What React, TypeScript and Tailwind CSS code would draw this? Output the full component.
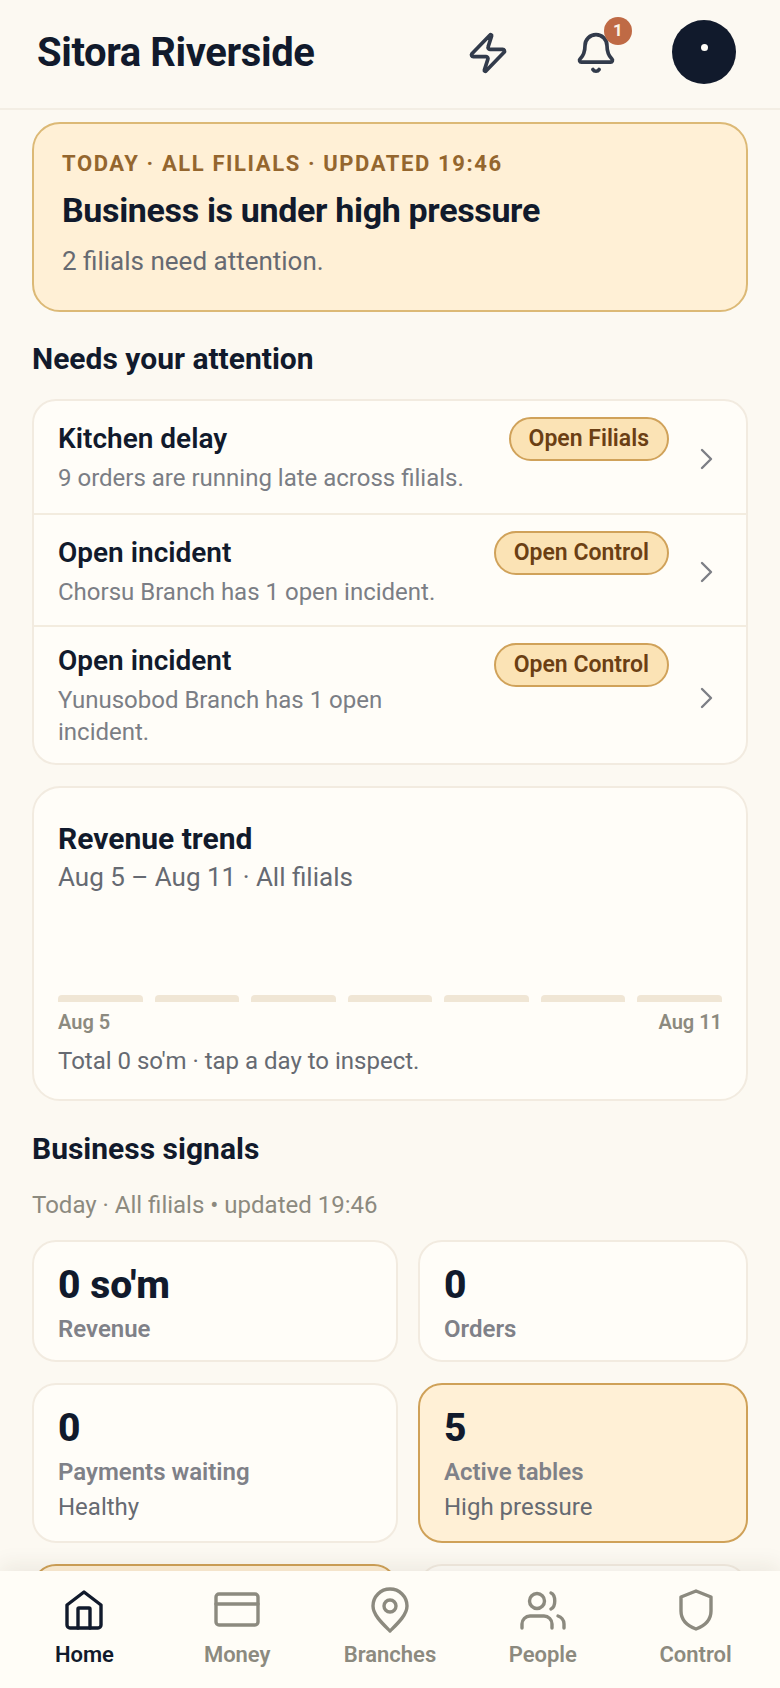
const DAYS = [1, 2, 3, 4, 5, 6, 7];

const ALERTS = [
  { title: 'Kitchen delay', text: '9 orders are running late across filials.', action: 'Open Filials', rowClass: 'h-[114px]', textClass: 'mt-[3px]' },
  { title: 'Open incident', text: 'Chorsu Branch has 1 open incident.', action: 'Open Control', rowClass: 'h-[112px]', textClass: 'mt-[3px]' },
  { title: 'Open incident', text: 'Yunusobod Branch has 1 open incident.', action: 'Open Control', rowClass: 'h-[137px]', textClass: '-mt-[1px]' },
];

function Chevron() {
  return (
    <svg width="18" height="24" viewBox="0 0 18 24" fill="none" stroke="#7d7f85" strokeWidth="2.4" strokeLinecap="round" strokeLinejoin="round" className="shrink-0">
      <path d="M4 3l9 9-9 9" />
    </svg>
  );
}

function AlertRow(props: { title: string; text: string; action: string; rowClass: string; textClass: string; last: boolean }) {
  return (
    <div className={`flex items-start pl-6 pr-[30px] pt-4 ${props.rowClass} ${props.last ? '' : 'border-b-2 border-[#f3ecdf]'}`}>
      <div className={`flex-1 min-w-0 ${props.textClass}`}>
        <div className="text-[28px] leading-[37px] font-semibold text-[#111a2c]">{props.title}</div>
        <div className="mt-[5px] w-[412px] text-[24px] leading-8 text-[#7b7e85]">{props.text}</div>
      </div>
      <div className="h-11 px-[18px] flex items-center rounded-full bg-[#fbe3b5] border-2 border-[#d0a25a] text-[23px] font-semibold text-[#6b3f14] shrink-0">
        {props.action}
      </div>
      <div className="w-[47px] shrink-0 flex justify-end self-center pb-3">
        <Chevron />
      </div>
    </div>
  );
}

function Signal(props: { value: string; label: string; note?: string; warm?: boolean }) {
  return (
    <div className={`rounded-[24px] border-2 px-6 pt-[18px] ${props.note ? 'h-[160px]' : 'h-[122px]'} ${props.warm ? 'bg-[#fff0d6] border-[#cfa158]' : 'bg-[#fffdf8] border-[#f2ebe0]'}`}>
      <div className="text-[39px] leading-[50px] font-extrabold text-[#111a2c]">{props.value}</div>
      <div className="mt-[3px] text-[24px] leading-8 font-semibold text-[#7f8188]">{props.label}</div>
      {props.note && <div className="mt-[3px] text-[24px] leading-8 text-[#666a72]">{props.note}</div>}
    </div>
  );
}

function NavItem(props: { label: string; active?: boolean; children: React.ReactNode }) {
  return (
    <div className={`flex-1 flex flex-col items-center ${props.active ? 'text-[#111a2c]' : 'text-[#8c8a7f]'}`}>
      <div className="h-[50px] w-12 flex items-center justify-center">{props.children}</div>
      <span className="mt-[6px] text-[22px] leading-7 font-semibold">{props.label}</span>
    </div>
  );
}

export default function App() {
  return (
    <div className="h-[1688px] w-[780px] flex flex-col overflow-hidden bg-[#fcf9f2] font-['Roboto',sans-serif]">
      {/* Header */}
      <header className="h-[110px] shrink-0 flex items-center pl-[37px] pr-[44px] pb-1 border-b-2 border-[#f3eee4]">
        <h1 className="flex-1 mt-[1px] text-[40px] font-bold tracking-[-0.4px] text-[#111a2c]">Sitora Riverside</h1>
        <svg width="44" height="44" viewBox="0 0 24 24" fill="none" stroke="#323b4b" strokeWidth="2" strokeLinecap="round" strokeLinejoin="round" className="mr-16 mt-[2px]">
          <path d="M4 14a1 1 0 0 1-.78-1.63l9.9-10.2a.5.5 0 0 1 .86.46l-1.92 6.02A1 1 0 0 0 13 10h7a1 1 0 0 1 .78 1.63l-9.9 10.2a.5.5 0 0 1-.86-.46l1.92-6.02A1 1 0 0 0 11 14z" />
        </svg>
        <div className="relative mr-[54px] mt-[2px]">
          <svg width="44" height="44" viewBox="0 0 24 24" fill="none" stroke="#323b4b" strokeWidth="2" strokeLinecap="round" strokeLinejoin="round">
            <path d="M10.300 21a2 2 0 0 0 3.400 0" />
            <path d="M3.300 15.300A1 1 0 0 0 4 17h16a1 1 0 0 0 .7-1.700C19.400 14 18 12.500 18 8A6 6 0 0 0 6 8c0 4.500-1.400 6-2.700 7.300" />
          </svg>
          <div className="absolute -top-[14px] -right-[14px] w-7 h-7 rounded-full bg-[#bf6a45] flex items-center justify-center text-[17px] font-bold text-[#fdf3e6]">1</div>
        </div>
        <div className="w-16 h-16 rounded-full bg-[#111a2c] flex justify-center pt-6">
          <div className="w-[7px] h-[7px] rounded-full bg-[#fffdf8]" />
        </div>
      </header>

      <main className="flex-1 min-h-0 overflow-hidden px-8 pt-3">
        {/* Pressure banner */}
        <section className="h-[190px] rounded-[28px] border-2 border-[#dcb976] bg-[#fff0d6] px-[28px] pt-[26px]">
          <div className="text-[22px] leading-7 font-bold tracking-[1.6px] text-[#94662e]">TODAY · ALL FILIALS · UPDATED 19:46</div>
          <div className="mt-[10px] text-[34px] leading-[44px] font-bold tracking-[-0.34px] text-[#111a2c]">Business is under high pressure</div>
          <div className="mt-[13px] text-[26px] leading-8 text-[#666a72]">2 filials need attention.</div>
        </section>

        <h2 className="mt-[29px] text-[30px] leading-9 font-bold text-[#111a2c]">Needs your attention</h2>

        <section className="mt-[22px] h-[366px] rounded-[24px] border-2 border-[#f2ebe0] bg-[#fffdf8] overflow-hidden">
          {ALERTS.map((alert, i) => (
            <AlertRow key={i} {...alert} last={i === ALERTS.length - 1} />
          ))}
        </section>

        {/* Revenue trend */}
        <section className="mt-[21px] h-[315px] rounded-[28px] border-2 border-[#f2ebe0] bg-[#fffdf8] px-6 pt-[33px]">
          <div className="text-[30px] leading-9 font-bold text-[#111a2c]">Revenue trend</div>
          <div className="mt-[2px] text-[26px] leading-9 text-[#666a72]">Aug 5 – Aug 11 · All filials</div>
          <div className="mt-[100px] flex gap-3">
            {DAYS.map((d) => (
              <div key={d} className="flex-1 h-[7px] rounded-t-[4px] bg-[#f0e6d5]" />
            ))}
          </div>
          <div className="mt-[6px] flex justify-between text-[20px] leading-7 font-semibold text-[#8c8a7f]">
            <span>Aug 5</span>
            <span>Aug 11</span>
          </div>
          <div className="mt-[9px] text-[24px] leading-8 text-[#666a72]">Total 0 so'm · tap a day to inspect.</div>
        </section>

        <h2 className="mt-[30px] text-[30px] leading-9 font-bold text-[#111a2c]">Business signals</h2>
        <div className="mt-[22px] text-[24px] leading-8 text-[#8c8a7f]">Today · All filials • updated 19:46</div>

        <div className="mt-[19px] grid grid-cols-[366px_330px] gap-x-5 gap-y-[21px]">
          <Signal value="0 so'm" label="Revenue" />
          <Signal value="0" label="Orders" />
          <Signal value="0" label="Payments waiting" note="Healthy" />
          <Signal value="5" label="Active tables" note="High pressure" warm />
          <div className="h-[120px] rounded-[24px] border-2 border-[#cfa158] bg-[#fff0d6]" />
          <div className="h-[120px] rounded-[24px] border-2 border-[#f2ebe0] bg-[#fffdf8]" />
        </div>
      </main>

      {/* Bottom nav */}
      <nav className="relative h-[117px] shrink-0 flex pt-[14px] px-[8px] bg-[#fffdf7] shadow-[0_-6px_20px_rgba(60,50,30,0.08)]">
        <NavItem label="Home" active>
          <svg width="40" height="42" viewBox="0 0 40 42" fill="none" stroke="currentColor" strokeWidth="3.4" strokeLinecap="round" strokeLinejoin="round">
            <path d="M3 16L20 3l17 13v20a3 3 0 0 1-3 3H6a3 3 0 0 1-3-3z" />
            <path d="M14 39V20a1 1 0 0 1 1-1h10a1 1 0 0 1 1 1v19" />
          </svg>
        </NavItem>
        <NavItem label="Money">
          <svg width="46" height="36" viewBox="0 0 46 36" fill="none" stroke="currentColor" strokeWidth="3.4" strokeLinecap="round" strokeLinejoin="round">
            <rect x="2" y="2" width="42" height="31" rx="3" />
            <path d="M2 12h42" />
          </svg>
        </NavItem>
        <NavItem label="Branches">
          <svg width="38" height="46" viewBox="0 0 38 46" fill="none" stroke="currentColor" strokeWidth="3.4" strokeLinecap="round" strokeLinejoin="round">
            <path d="M19 44C12 37 2 28 2 19a17 17 0 0 1 34 0c0 9-10 18-17 25z" />
            <circle cx="19" cy="19" r="6" />
          </svg>
        </NavItem>
        <NavItem label="People">
          <svg width="46" height="40" viewBox="0 0 46 40" fill="none" stroke="currentColor" strokeWidth="3.4" strokeLinecap="round" strokeLinejoin="round">
            <circle cx="17" cy="11" r="7.500" />
            <path d="M31 3c5 2 5 14 0 16" />
            <path d="M2 38v-4a8 8 0 0 1 8-8h14a8 8 0 0 1 8 8v4" />
            <path d="M38 26c3 1 6 4 6 8v4" />
          </svg>
        </NavItem>
        <NavItem label="Control">
          <svg width="36" height="42" viewBox="0 0 36 42" fill="none" stroke="currentColor" strokeWidth="3.4" strokeLinecap="round" strokeLinejoin="round">
            <path d="M18 2l15 6v14c0 9-7 15-15 18C10 37 3 31 3 22V8z" />
          </svg>
        </NavItem>
      </nav>
    </div>
  );
}
